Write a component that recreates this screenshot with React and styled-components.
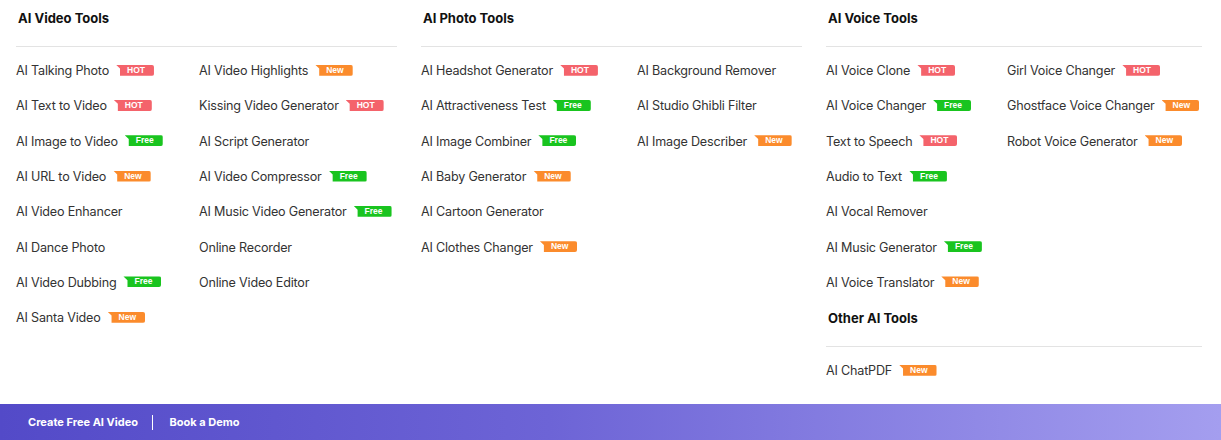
import React from "react";
import styled, { createGlobalStyle } from "styled-components";

const GlobalStyle = createGlobalStyle`
  html, body { margin: 0; padding: 0; background: #fff; }
  body { font-family: Inter, "Noto Sans", "Liberation Sans", sans-serif; color: #333; }
`;

const Page = styled.div`
  height: 100vh;
  display: flex;
  flex-direction: column;
  overflow: hidden;
`;

const Menu = styled.div`
  display: grid;
  grid-template-columns: 381px 381px 376px;
  column-gap: 24px;
  padding: 10px 0 0 16px;
`;

const Group = styled.div`
  display: flex;
  flex-direction: column;
`;

const Heading = styled.h3`
  margin: ${(p) => (p.$spaced ? "10px" : "0")} 0 0 2px;
  font-size: 13px;
  line-height: 16px;
  font-weight: 700;
  color: #111;
`;

const Divider = styled.hr`
  margin: 20px 0 0;
  border: 0;
  height: 1px;
  background: #e3e3e3;
`;

const List = styled.div`
  display: grid;
  grid-template-columns: ${(p) => p.$left}px 1fr;
  grid-auto-flow: column;
  grid-template-rows: ${(p) => `repeat(${p.$rows}, 35.3px)`};
  padding-top: 6px;
`;

const Item = styled.a`
  display: flex;
  align-items: center;
  gap: 7px;
  font-size: 12.6px;
  letter-spacing: -0.2px;
  color: #333;
  text-decoration: none;
  white-space: nowrap;
`;

const badgeColors = {
  HOT: "#f4636b",
  Free: "#19c41f",
  New: "#fb8b2c",
};

const Badge = styled.span`
  display: inline-block;
  height: 11px;
  line-height: 11px;
  padding: 0 9px 0 11px;
  font-family: "Liberation Sans", Arial, sans-serif;
  font-size: 8.5px;
  font-weight: 700;
  letter-spacing: 0;
  color: #fff;
  background: ${(p) => badgeColors[p.$kind]};
  border-radius: 0 2px 2px 0;
  clip-path: polygon(0 0, 100% 0, 100% 100%, 4px 100%, 4px 35%);
  margin-top: -1px;
`;

const Footer = styled.div`
  margin-top: auto;
  height: 36px;
  display: flex;
  align-items: center;
  padding-left: 28px;
  background: linear-gradient(90deg, #534ac8 0%, #6d64d6 45%, #a49eef 100%);
`;

const FooterLink = styled.a`
  font-size: 11px;
  font-weight: 700;
  color: #fff;
  text-decoration: none;
`;

const FooterSep = styled.span`
  width: 1.5px;
  height: 15px;
  background: #fff;
  margin: 0 16px 0 14px;
`;

const groups = [
  {
    title: "AI Video Tools",
    left: 183,
    rows: 8,
    items: [
      ["AI Talking Photo", "HOT"],
      ["AI Text to Video", "HOT"],
      ["AI Image to Video", "Free"],
      ["AI URL to Video", "New"],
      ["AI Video Enhancer"],
      ["AI Dance Photo"],
      ["AI Video Dubbing", "Free"],
      ["AI Santa Video", "New"],
      ["AI Video Highlights", "New"],
      ["Kissing Video Generator", "HOT"],
      ["AI Script Generator"],
      ["AI Video Compressor", "Free"],
      ["AI Music Video Generator", "Free"],
      ["Online Recorder"],
      ["Online Video Editor"],
    ],
  },
  {
    title: "AI Photo Tools",
    left: 216,
    rows: 6,
    items: [
      ["AI Headshot Generator", "HOT"],
      ["AI Attractiveness Test", "Free"],
      ["AI Image Combiner", "Free"],
      ["AI Baby Generator", "New"],
      ["AI Cartoon Generator"],
      ["AI Clothes Changer", "New"],
      ["AI Background Remover"],
      ["AI Studio Ghibli Filter"],
      ["AI Image Describer", "New"],
    ],
  },
];

const voice = [
  ["AI Voice Clone", "HOT"],
  ["AI Voice Changer", "Free"],
  ["Text to Speech", "HOT"],
  ["Audio to Text", "Free"],
  ["AI Vocal Remover"],
  ["AI Music Generator", "Free"],
  ["AI Voice Translator", "New"],
  ["Girl Voice Changer", "HOT"],
  ["Ghostface Voice Changer", "New"],
  ["Robot Voice Generator", "New"],
];

function Entry({ label, badge }) {
  return (
    <Item href="#">
      {label}
      {badge && <Badge $kind={badge}>{badge}</Badge>}
    </Item>
  );
}

export default function App() {
  return (
    <Page>
      <GlobalStyle />
      <Menu>
        {groups.map((g) => (
          <Group key={g.title}>
            <Heading>{g.title}</Heading>
            <Divider />
            <List $left={g.left} $rows={g.rows}>
              {g.items.map(([label, badge]) => (
                <Entry key={label} label={label} badge={badge} />
              ))}
            </List>
          </Group>
        ))}
        <Group>
          <Heading>AI Voice Tools</Heading>
          <Divider />
          <List $left={181} $rows={7}>
            {voice.map(([label, badge]) => (
              <Entry key={label} label={label} badge={badge} />
            ))}
          </List>
          <Heading $spaced>Other AI Tools</Heading>
          <Divider />
          <List $left={181} $rows={1}>
            <Entry label="AI ChatPDF" badge="New" />
          </List>
        </Group>
      </Menu>
      <Footer>
        <FooterLink href="#">Create Free AI Video</FooterLink>
        <FooterSep />
        <FooterLink href="#">Book a Demo</FooterLink>
      </Footer>
    </Page>
  );
}
